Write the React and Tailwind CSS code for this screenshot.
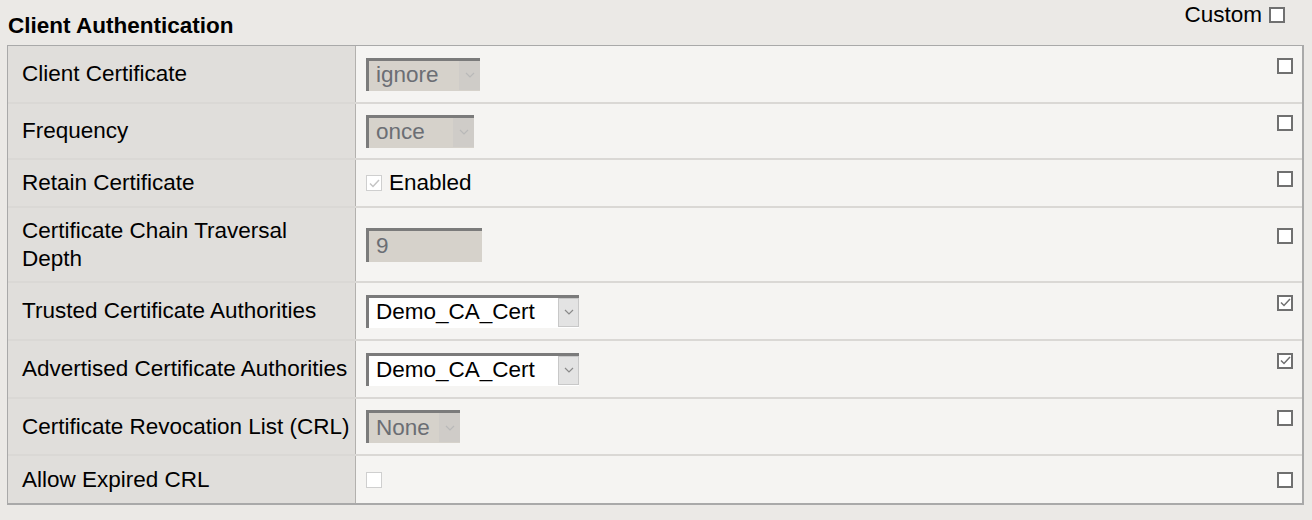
import React from 'react';

const Chevron = ({ className }) => (
  <svg width="10" height="6" viewBox="0 0 10 6" className={className}>
    <path d="M1 1 L5 5 L9 1" fill="none" stroke="currentColor" strokeWidth="1.2" />
  </svg>
);

const Box = ({ checked, disabled }) => (
  <div
    className={
      'w-[16px] h-[16px] flex items-center justify-center shrink-0 ' +
      (disabled ? 'border border-[#cfcfcf] bg-white' : 'border-2 border-[#707070] bg-white')
    }
  >
    {checked && (
      <svg width="11" height="9" viewBox="0 0 11 9">
        <path
          d="M1 4.5 L4 7.5 L10 1"
          fill="none"
          stroke={disabled ? '#c4c4c4' : '#707070'}
          strokeWidth="1.5"
        />
      </svg>
    )}
  </div>
);

const Select = ({ value, width, disabled }) => (
  <div
    className={
      'h-[33px] flex items-stretch border-t-[3px] border-l-[3px] border-[#7b7b7b] ' +
      (disabled ? 'bg-[#d6d2cb] text-[#6b6e74]' : 'bg-white text-black')
    }
    style={{ width }}
  >
    <div className="flex-1 pl-[7px] flex items-center leading-none">{value}</div>
    <div
      className={
        'w-[21px] mb-[1px] flex items-center justify-center ' +
        (disabled ? 'bg-[#cfccc8] text-[#b9b9b9]' : 'bg-[#e3e3e3] border border-[#c8c8c8] text-[#8a8a8a]')
      }
    >
      <Chevron />
    </div>
  </div>
);

const rows = [
  { label: 'Client Certificate', h: 'h-[56px]', value: <Select value="ignore" width={114} disabled /> },
  { label: 'Frequency', h: 'h-[56px]', value: <Select value="once" width={108} disabled /> },
  {
    label: 'Retain Certificate',
    h: 'h-[48px]',
    value: (
      <div className="flex items-center gap-[7px] h-[24px]">
        <Box checked disabled />
        <span>Enabled</span>
      </div>
    ),
  },
  {
    label: (
      <>
        Certificate Chain Traversal
        <br />
        Depth
      </>
    ),
    h: 'h-[75px]',
    value: (
      <div className="w-[116px] h-[34px] bg-[#d6d2cb] text-[#6b6e74] border-t-[3px] border-l-[3px] border-[#7b7b7b] pl-[7px] flex items-center">
        9
      </div>
    ),
  },
  { label: 'Trusted Certificate Authorities', h: 'h-[58px]', value: <Select value="Demo_CA_Cert" width={213} />, custom: true },
  { label: 'Advertised Certificate Authorities', h: 'h-[58px]', value: <Select value="Demo_CA_Cert" width={213} />, custom: true },
  { label: 'Certificate Revocation List (CRL)', h: 'h-[57px]', value: <Select value="None" width={94} disabled /> },
  {
    label: 'Allow Expired CRL',
    h: 'h-[49px]',
    value: (
      <div className="h-[16px] flex items-center">
        <Box disabled />
      </div>
    ),
  },
];

export default function App() {
  return (
    <div
      className="w-[1312px] h-[520px] bg-[#ebe9e6] text-black text-[22.5px] leading-[28px] overflow-hidden"
      style={{ fontFamily: '"Liberation Sans", Arial, sans-serif' }}
    >
      <div className="flex items-start justify-between pl-[8px] pr-[27px]">
        <h2 className="font-bold text-[22.5px] mt-[12px] leading-[28px]">Client Authentication</h2>
        <div className="flex items-center gap-[7px] mt-[1px]">
          <span>Custom</span>
          <Box />
        </div>
      </div>
      <div className="mt-[5px] ml-[7px] w-[1297px] border border-[#a9a9a9] border-b-2 border-r-2">
        {rows.map((r, i) => (
          <div
            key={i}
            className={'flex ' + r.h + (i > 0 ? ' border-t-2 border-[#dad8d5]' : '')}
          >
            <div className="w-[348px] shrink-0 bg-[#e0dedb] pl-[14px] flex items-center border-r border-[#b3b1ae]">
              <div>{r.label}</div>
            </div>
            <div className="flex-1 bg-[#f5f4f2] pl-[10px] pr-[9px] flex items-center">
              <div className="flex-1 flex items-start justify-between">
                {r.value}
                <Box checked={r.custom} />
              </div>
            </div>
          </div>
        ))}
      </div>
    </div>
  );
}
